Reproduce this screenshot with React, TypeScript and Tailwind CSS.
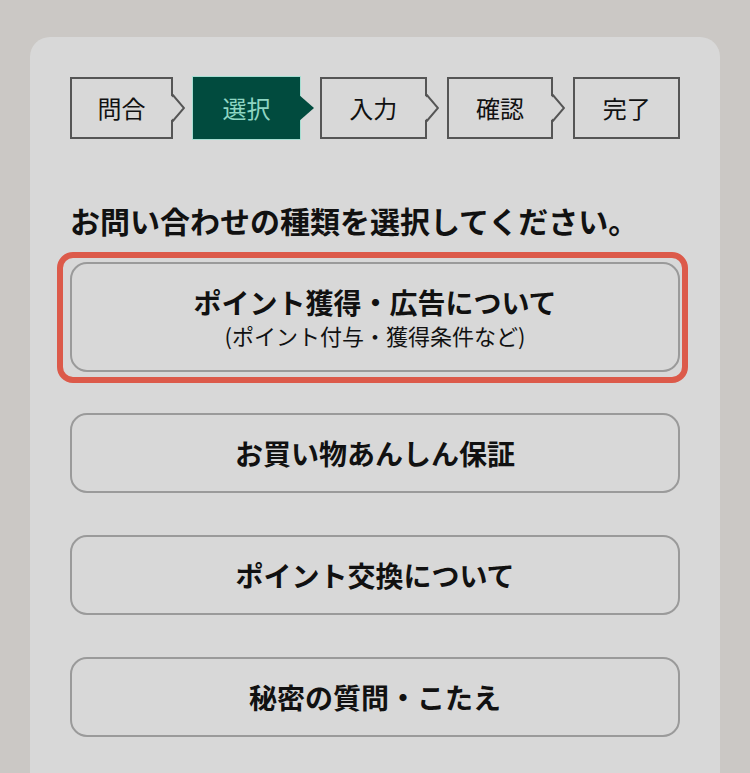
import React from 'react';

type Step = { label: string; active?: boolean; last?: boolean; width?: string };

const steps: Step[] = [
  { label: '問合', width: 'w-[103px] flex-none' },
  { label: '選択', active: true, width: 'w-[107px] flex-none' },
  { label: '入力' },
  { label: '確認' },
  { label: '完了', last: true },
];

const options = ['お買い物あんしん保証', 'ポイント交換について', '秘密の質問・こたえ'];

const font = { fontFamily: '"Noto Sans CJK JP", "Noto Sans", sans-serif' };

const StepBox: React.FC<{ step: Step }> = ({ step }) => {
  const fill = step.active ? '#014b3e' : '#d8d8d8';
  return (
    <div
      className={
        'relative h-[62px] flex items-center justify-center text-[24px] leading-none ' +
        (step.width ?? 'flex-1') +
        ' ' +
        (step.active
          ? 'bg-[#014b3e] text-[#8fd6c3] shadow-[0_0_0_1px_#a6ded2]'
          : 'border-2 border-[#555555] text-[#111111]')
      }
    >
      {step.label}
      {!step.last && (
        <svg
          width="16"
          height="28"
          viewBox="0 0 16 28"
          className="absolute top-1/2 -translate-y-1/2 right-[-14px]"
        >
          <polygon points="0,0 16,14 0,28" fill={fill} />
          {!step.active && <polyline points="3,0 15,14 3,28" fill="none" stroke="#555555" strokeWidth="2" />}
        </svg>
      )}
    </div>
  );
};

const App: React.FC = () => {
  return (
    <div className="min-h-screen bg-[#cbc8c5] pt-[37px] px-[30px] overflow-hidden" style={font}>
      <div className="bg-[#d8d8d8] rounded-[20px] px-[40px] pt-[40px] pb-[60px]">
        <div className="flex gap-[20px]">
          {steps.map((s) => (
            <StepBox key={s.label} step={s} />
          ))}
        </div>

        <h1 className="mt-[66px] text-[30px] leading-[30px] font-bold text-[#111111] whitespace-nowrap">
          お問い合わせの種類を選択してください。
        </h1>

        <div className="mt-[17px] ml-[-13px] mr-[-8px] border-[6px] border-[#dc5a4a] rounded-[16px] pl-[7px] pr-[2px] pt-[4px] pb-[5px]">
          <button className="w-full h-[110px] rounded-[17px] border-2 border-[#9a9a9a] bg-[#d8d8d8] flex flex-col items-center justify-center gap-[8px] text-[#111111]">
            <span className="text-[28px] leading-[28px] font-bold">ポイント獲得・広告について</span>
            <span className="text-[22px] leading-[22px]">(ポイント付与・獲得条件など)</span>
          </button>
        </div>

        <div className="mt-[30px] flex flex-col gap-[42px]">
          {options.map((o) => (
            <button
              key={o}
              className="w-full h-[80px] rounded-[17px] border-2 border-[#9a9a9a] bg-[#d8d8d8] flex items-center justify-center text-[28px] font-bold text-[#111111]"
            >
              {o}
            </button>
          ))}
        </div>
      </div>
    </div>
  );
};

export default App;
